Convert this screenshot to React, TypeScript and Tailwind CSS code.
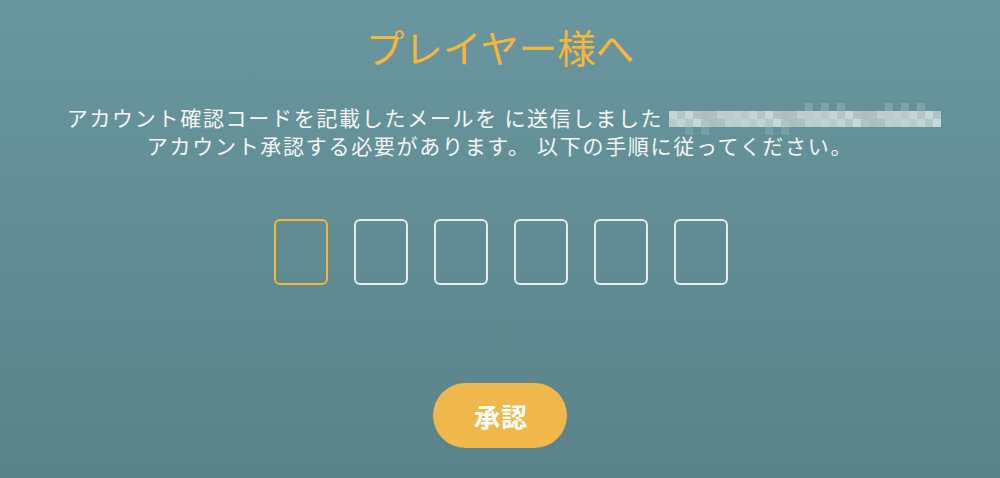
import React from "react";

// Pixelated block that hides the recipient's address
const mosaicRows: string[][] = (() => {
  const cols = 34;
  const rows: string[][] = [];
  const seed = [3, 7, 1, 9, 4, 6, 2, 8, 5, 0];
  for (let r = 0; r < 4; r++) {
    const row: string[] = [];
    for (let c = 0; c < cols; c++) {
      const v = seed[(c * 3 + r * 7) % 10];
      if (r === 0) {
        row.push(v > 6 && c > 16 ? "rgba(150,188,192,0.45)" : "transparent");
      } else if (r === 3) {
        row.push(v > 7 && c < 20 ? "rgba(150,188,192,0.35)" : "transparent");
      } else {
        const light = 184 + v * 3;
        row.push(`rgb(${light - 14}, ${light + 6}, ${light + 8})`);
      }
    }
    rows.push(row);
  }
  return rows;
})();

function Mosaic() {
  return (
    <span className="inline-flex flex-col align-middle ml-[6px] mt-[4px]">
      {mosaicRows.map((row, i) => (
        <span key={i} className="flex">
          {row.map((c, j) => (
            <span key={j} className="block w-[8px] h-[8px]" style={{ background: c }} />
          ))}
        </span>
      ))}
    </span>
  );
}

export default function App() {
  return (
    <div
      className="w-[1000px] h-[478px] flex flex-col items-center bg-gradient-to-b from-[#69969f] to-[#5a8389] text-white"
      style={{ fontFamily: '"Noto Sans CJK JP", "Noto Sans", sans-serif' }}
    >
      <h1 className="mt-[22px] text-[38.5px] leading-[48px] text-[#f4b63c] font-normal">プレイヤー様へ</h1>
      <div className="mt-[33px] text-[21px] leading-[28px] tracking-[1.7px] text-center text-[#f4f6f6]">
        <div className="flex items-center justify-center pl-[8px] h-[28px]">
          <span>アカウント確認コードを記載したメールを に送信しました</span>
          <Mosaic />
        </div>
        <div>アカウント承認する必要があります。 以下の手順に従ってください。</div>
      </div>
      <div className="mt-[60px] flex gap-[26px] pl-[2px]">
        {[0, 1, 2, 3, 4, 5].map((i) => (
          <div
            key={i}
            className={`w-[54px] h-[66px] rounded-[6px] border-2 ${
              i === 0 ? "border-[#f4b63c]" : "border-[#e6ecec]"
            }`}
          />
        ))}
      </div>
      <button className="mt-[98px] w-[134px] h-[65px] rounded-full bg-[#f0b84a] text-white text-[26px] font-bold tracking-[1px] pl-[2px]">
        承認
      </button>
    </div>
  );
}
